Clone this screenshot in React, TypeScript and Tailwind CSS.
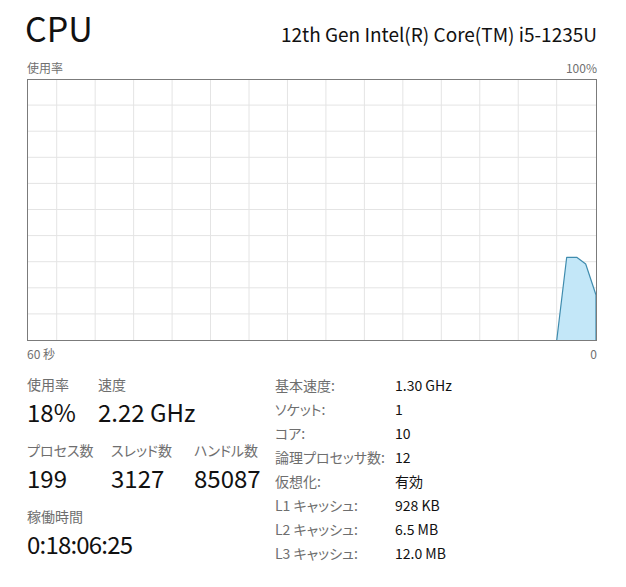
const font = { fontFamily: '"Noto Sans CJK JP", "Noto Sans", sans-serif' };

const vLines = Array.from({ length: 14 }, (_, i) => 29.7 + i * 38.46);
const hLines = Array.from({ length: 9 }, (_, i) => (i + 1) * 26.1);

function Graph() {
  return (
    <svg width="570" height="262" viewBox="0 0 570 262" className="block">
      {vLines.map((x) => (
        <line key={`v${x}`} x1={x} y1="0" x2={x} y2="262" stroke="#e4e4e4" strokeWidth="1" />
      ))}
      {hLines.map((y) => (
        <line key={`h${y}`} x1="0" y1={y} x2="570" y2={y} stroke="#e4e4e4" strokeWidth="1" />
      ))}
      <polygon
        points="529.7,261.5 539.7,178.3 549.7,178.3 558.7,185 569,216 569,261.5"
        fill="#c3e7f8"
        stroke="#3f8cae"
        strokeWidth="1.2"
        strokeLinejoin="round"
      />
      <rect x="0.5" y="0.5" width="569" height="261" fill="none" stroke="#7b7b7b" strokeWidth="1" />
    </svg>
  );
}

function Stat({ label, value, w, tight }: { label: string; value: string; w?: string; tight?: boolean }) {
  return (
    <div className={w}>
      <div className="text-[14px] leading-[21px] text-[#6e6e6e]">{label}</div>
      <div className={`text-[24px] leading-[34px] text-[#111] ${tight ? 'tracking-[-0.8px]' : ''}`}>
        {value}
      </div>
    </div>
  );
}

const specs: [string, string][] = [
  ['基本速度:', '1.30 GHz'],
  ['ソケット:', '1'],
  ['コア:', '10'],
  ['論理プロセッサ数:', '12'],
  ['仮想化:', '有効'],
  ['L1 キャッシュ:', '928 KB'],
  ['L2 キャッシュ:', '6.5 MB'],
  ['L3 キャッシュ:', '12.0 MB'],
];

export default function App() {
  return (
    <div
      className="w-[626px] h-[587px] bg-white pl-[27px] pr-[29px] pt-[8px] overflow-hidden [font-feature-settings:'palt']"
      style={font}
    >
      <div className="flex items-baseline justify-between">
        <h1 className="text-[34px] leading-[40px] text-[#111] ml-[-2px]">CPU</h1>
        <div className="text-[19px] leading-[24px] text-[#111]">12th Gen Intel(R) Core(TM) i5-1235U</div>
      </div>

      <div className="mt-[12px] flex justify-between text-[12px] leading-[16px] text-[#707070]">
        <span>使用率</span>
        <span>100%</span>
      </div>

      <div className="mt-[3px]">
        <Graph />
      </div>

      <div className="mt-[5px] flex justify-between text-[12px] leading-[16px] text-[#707070]">
        <span>60 秒</span>
        <span>0</span>
      </div>

      <div className="mt-[12px] flex">
        <div className="w-[248px] flex flex-col gap-[11px]">
          <div className="flex">
            <Stat label="使用率" value="18%" w="w-[71px]" />
            <Stat label="速度" value="2.22 GHz" />
          </div>
          <div className="flex">
            <Stat label="プロセス数" value="199" w="w-[84px]" />
            <Stat label="スレッド数" value="3127" w="w-[83px]" />
            <Stat label="ハンドル数" value="85087" />
          </div>
          <Stat label="稼働時間" value="0:18:06:25" tight />
        </div>

        <div className="flex flex-col -mt-[1px]">
          {specs.map(([k, v]) => (
            <div key={k} className="flex text-[14px] leading-[24px]">
              <span className="w-[120px] text-[#6e6e6e]">{k}</span>
              <span className="text-[#111]">{v}</span>
            </div>
          ))}
        </div>
      </div>
    </div>
  );
}
